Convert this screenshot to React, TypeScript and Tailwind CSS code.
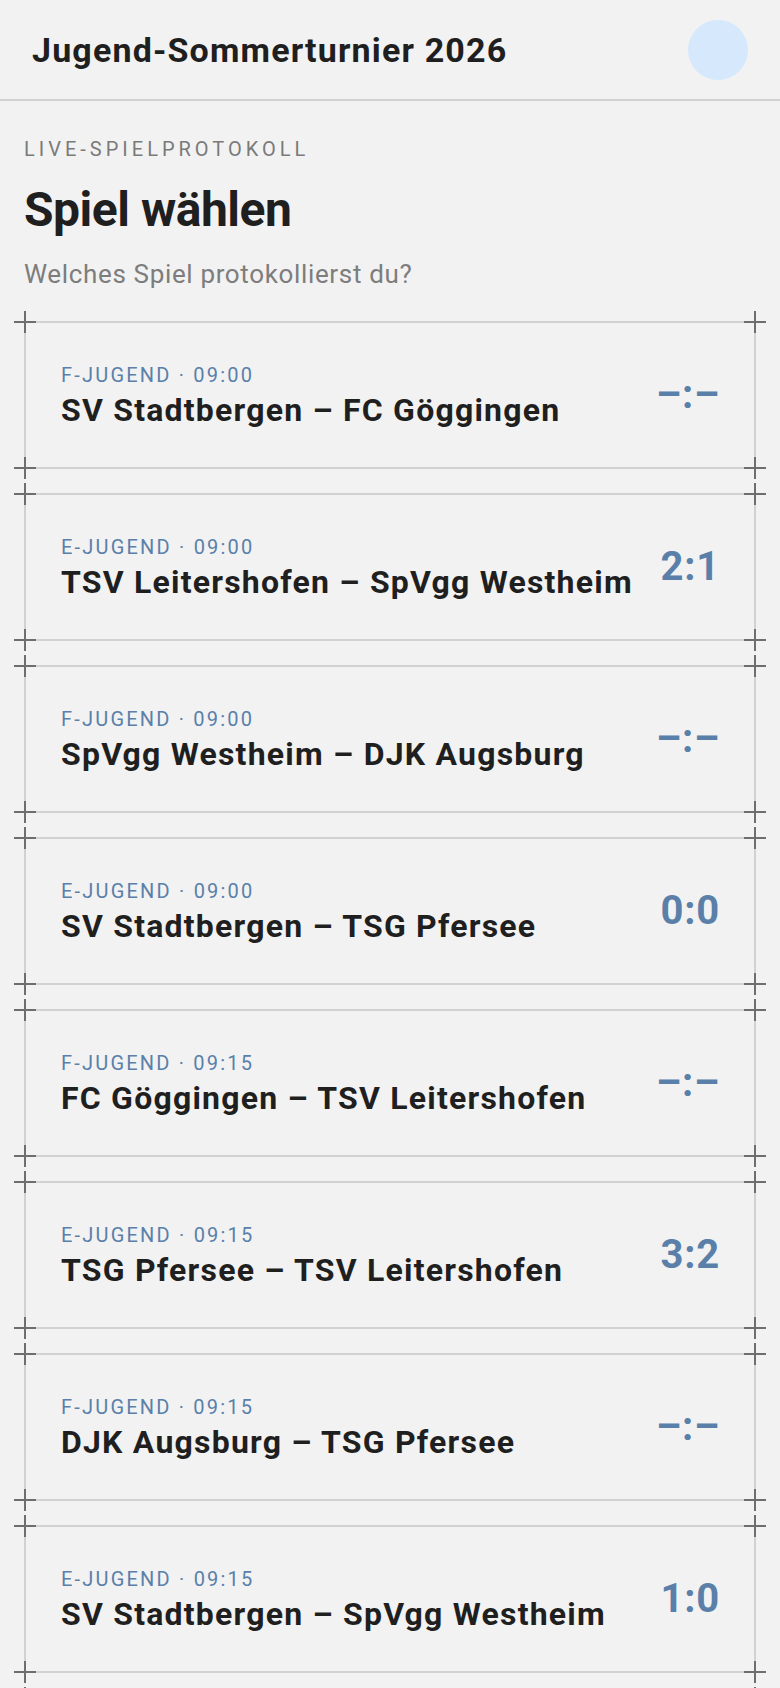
import React from "react";

type Match = { label: string; teams: string; score: string };

const matches: Match[] = [
  { label: "F-Jugend · 09:00", teams: "SV Stadtbergen – FC Göggingen", score: "–:–" },
  { label: "E-Jugend · 09:00", teams: "TSV Leitershofen – SpVgg Westheim", score: "2:1" },
  { label: "F-Jugend · 09:00", teams: "SpVgg Westheim – DJK Augsburg", score: "–:–" },
  { label: "E-Jugend · 09:00", teams: "SV Stadtbergen – TSG Pfersee", score: "0:0" },
  { label: "F-Jugend · 09:15", teams: "FC Göggingen – TSV Leitershofen", score: "–:–" },
  { label: "E-Jugend · 09:15", teams: "TSG Pfersee – TSV Leitershofen", score: "3:2" },
  { label: "F-Jugend · 09:15", teams: "DJK Augsburg – TSG Pfersee", score: "–:–" },
  { label: "E-Jugend · 09:15", teams: "SV Stadtbergen – SpVgg Westheim", score: "1:0" },
  { label: "F-Jugend · 09:30", teams: "FC Göggingen – DJK Augsburg", score: "–:–" },
];

function Cross({ pos }: { pos: string }) {
  return (
    <span className={`pointer-events-none absolute h-[22px] w-[22px] ${pos}`}>
      <span className="absolute left-0 top-[10px] h-[2px] w-[22px] bg-[#6e6e6e]" />
      <span className="absolute left-[10px] top-0 h-[22px] w-[2px] bg-[#6e6e6e]" />
    </span>
  );
}

function Card({ m }: { m: Match }) {
  return (
    <button className="relative flex w-full items-center justify-between border-2 border-[#d2d2d2] bg-[#f2f2f2] pl-[35px] pr-[34px] py-[37px] text-left">
      <Cross pos="-left-[12px] -top-[12px]" />
      <Cross pos="-right-[12px] -top-[12px]" />
      <Cross pos="-left-[12px] -bottom-[12px]" />
      <Cross pos="-right-[12px] -bottom-[12px]" />
      <div className="flex flex-col">
        <span className="text-[20px] leading-[30px] uppercase tracking-[0.11em] text-[#5a80aa]">
          {m.label}
        </span>
        <span className="text-[32px] leading-[40px] font-bold tracking-[0.038em] text-[#1f1f1f]">
          {m.teams}
        </span>
      </div>
      <span className="text-[40px] leading-[44px] font-bold tracking-[0.02em] text-[#5a80aa]">{m.score}</span>
    </button>
  );
}

export default function App() {
  return (
    <div
      className="min-h-screen bg-[#f2f2f2] text-[#1f1f1f]"
      style={{ fontFamily: "Roboto, 'Noto Sans', sans-serif" }}
    >
      <header className="flex h-[101px] items-center justify-between border-b-2 border-[#d2d2d2] px-8">
        <h1 className="text-[34px] font-bold leading-[40px] tracking-[0.034em] text-[#1f1f1f]">
          Jugend-Sommerturnier 2026
        </h1>
        <div className="h-[60px] w-[60px] rounded-full bg-[#d6e8fc]" />
      </header>
      <main className="px-6 pt-[34px]">
        <div className="text-[20px] leading-[28px] uppercase tracking-[0.2em] text-[#7a7a7a]">
          Live-Spielprotokoll
        </div>
        <h2 className="mt-[19px] text-[48px] font-bold leading-[56px] tracking-[-0.01em] text-[#1f1f1f]">
          Spiel wählen
        </h2>
        <p className="mt-[18px] text-[26px] leading-[36px] tracking-[0.025em] text-[#7d7d7d]">
          Welches Spiel protokollierst du?
        </p>
        <div className="mt-[29px] flex flex-col gap-[24px] pb-10">
          {matches.map((m, i) => (
            <Card key={i} m={m} />
          ))}
        </div>
      </main>
    </div>
  );
}
